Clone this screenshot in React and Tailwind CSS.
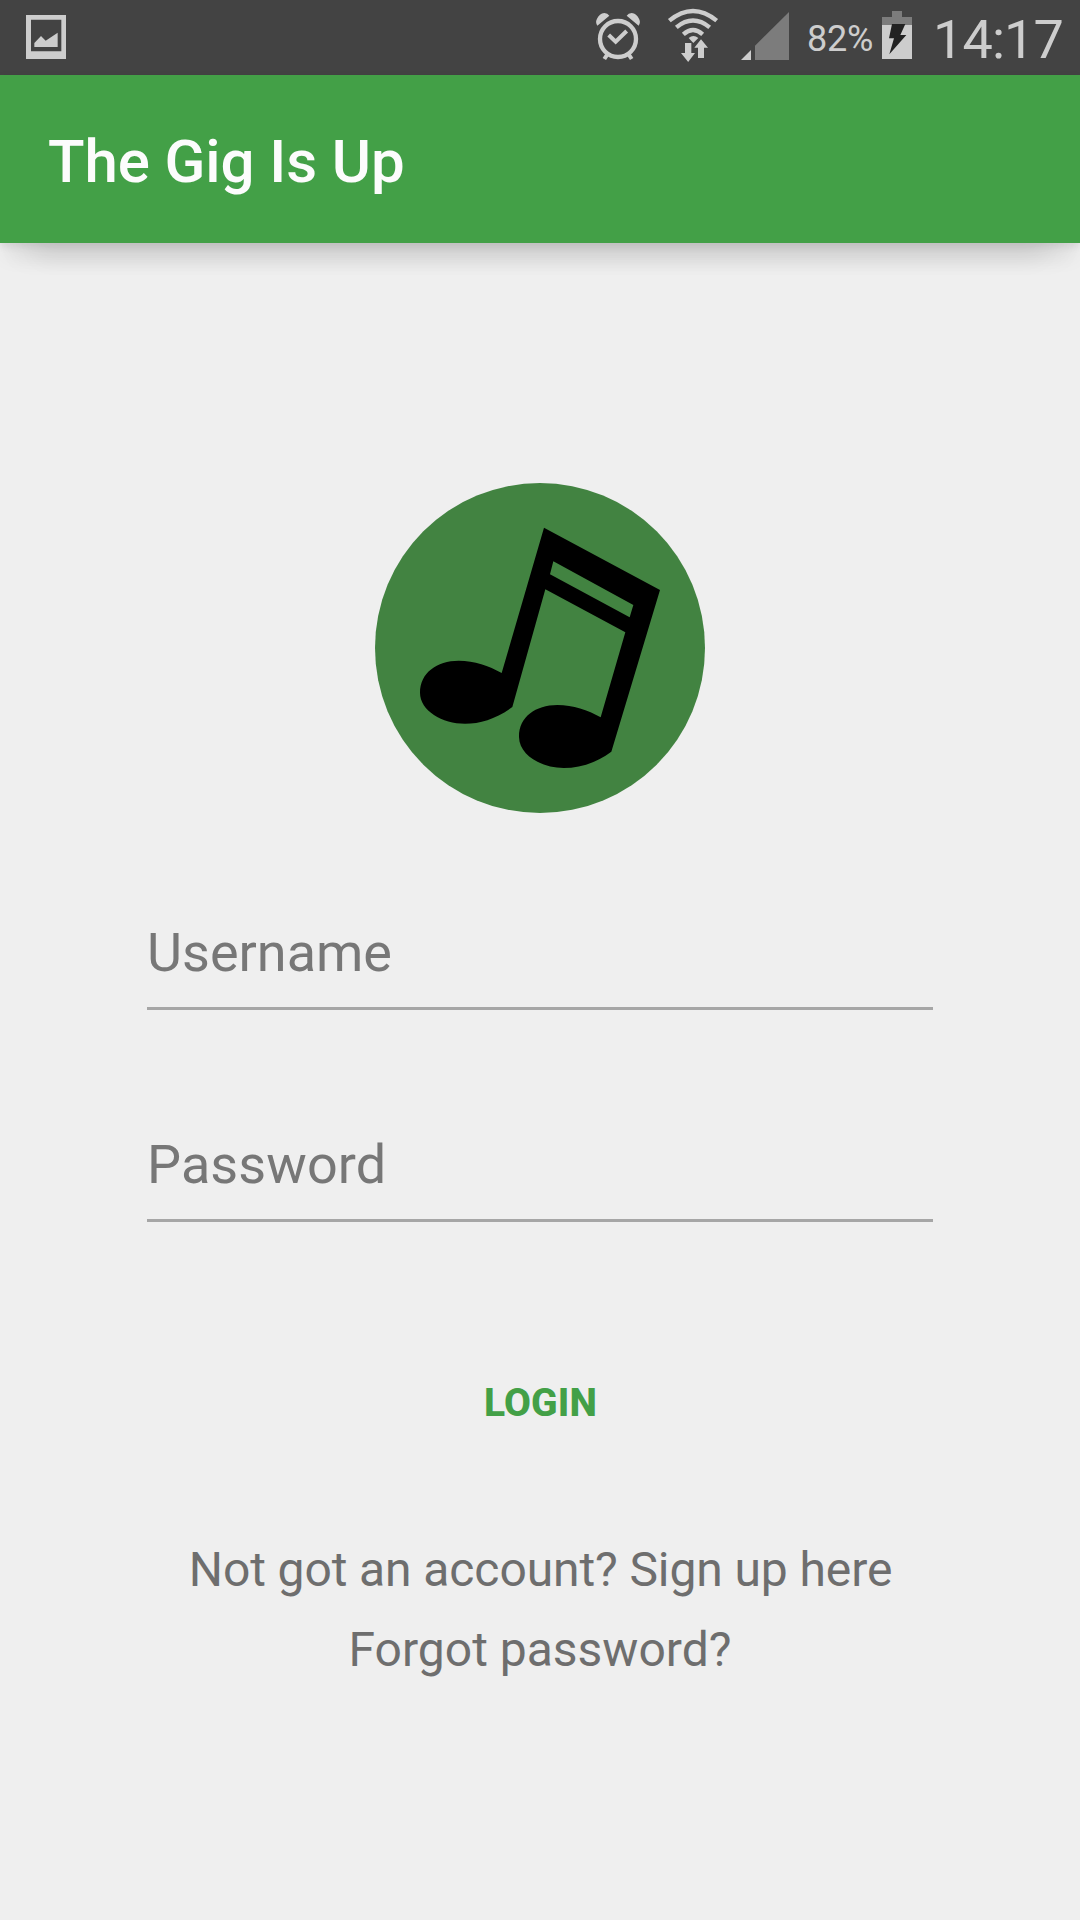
import React from "react";

function PictureIcon() {
  return (
    <svg className="ml-[26px] h-[75px] w-10 shrink-0" viewBox="78 0 120 225" fill="#cdcdcd">
      <path fillRule="evenodd" d="M78 45H198V177H78ZM93 59V154H184V59Z" />
      <path d="M103 141V129L123 108L137 122L173 98V141Z" />
    </svg>
  );
}

function AlarmIcon() {
  return (
    <svg className="ml-[530px] h-[75px] w-[45px] shrink-0" viewBox="48 0 135 225" fill="none" stroke="#cdcdcd">
      <circle cx="114" cy="117" r="54" strokeWidth="13" />
      <path d="M86 105L107 125L140 93" strokeWidth="12" />
      <path d="M82 163L73 177M146 163L155 177" strokeWidth="12" />
      <path fill="#cdcdcd" stroke="none" d="M52 77Q45 67 51 56Q58 41 73 39Q83 40 88 47ZM176 77Q183 67 177 56Q170 41 155 39Q145 40 140 47Z" />
    </svg>
  );
}

function WifiIcon() {
  return (
    <svg className="ml-[25px] h-[75px] w-[54px] shrink-0" viewBox="258 0 162 225" fill="none" stroke="#cdcdcd">
      <path d="M268 62Q339 4 410 62" strokeWidth="13" />
      <path d="M289 82Q339 41 389 82" strokeWidth="13" />
      <path d="M310 103Q339 77 368 103" strokeWidth="13" />
      <path fill="#cdcdcd" stroke="none" d="M326 114Q340 102 355 114L340 129Z" />
      <path
        fill="#cdcdcd"
        stroke="#434343"
        strokeWidth="5"
        paintOrder="stroke"
        d="M315 129H334V159H345L324.500 186L303 159H315ZM354 174V143H343L363 118L384 143H372V174Z"
      />
    </svg>
  );
}

function SignalIcon() {
  return (
    <svg className="ml-[21px] h-[75px] w-12 shrink-0" viewBox="483 0 144 225">
      <path fill="#cdcdcd" d="M483 180L513 150V180Z" />
      <path fill="#7c7c7c" d="M525 180V137L627 36V180Z" />
    </svg>
  );
}

function BatteryIcon() {
  return (
    <svg className="h-[75px] w-[30px] shrink-0" viewBox="306 0 90 225">
      <path fill="#7c7c7c" d="M336 33H366V51H396V75H306V51H336Z" />
      <path fill="#cdcdcd" d="M306 75H396V177H306Z" />
      <path fill="#222" d="M336 72H376L361 105H379L328 163L342 115H327Z" />
    </svg>
  );
}

function StatusBar() {
  return (
    <div className="flex h-[75px] items-start bg-[#434343] text-[#cdcdcd]">
      <PictureIcon />
      <AlarmIcon />
      <WifiIcon />
      <SignalIcon />
      <span className="ml-[18px] w-[75px] shrink-0 pt-[2px] text-[36px] leading-[75px] tracking-[-0.2px]">82%</span>
      <BatteryIcon />
      <span className="ml-[21px] shrink-0 whitespace-nowrap pt-[2px] text-[54px] leading-[75px] tracking-[-0.9px]">14:17</span>
    </div>
  );
}

function Logo() {
  return (
    <svg className="mt-[240px] h-[330px] w-[330px] shrink-0" viewBox="45 39 990 990">
      <circle cx="540" cy="534" r="495" fill="#428341" />
      <path
        fillRule="evenodd"
        d="M552 173L900 360L754 845C706 880 660 894 611 894C545 894 478 856 477 801C476 742 526 705 592 705C640 705 683 720 722 742L796 487L556 358L457 711C409 746 362 761 315 761C247 761 180 722 180 668C180 609 230 572 296 572C344 572 386 587 425 609ZM580 274L570 313L809 442L820 405Z"
      />
    </svg>
  );
}

function Field({ label, className }) {
  return (
    <div className={"h-[94px] w-[786px] border-b-[3px] border-[#a6a6a6] text-[54px] leading-[73px] text-[#777] " + className}>
      {label}
    </div>
  );
}

export default function App() {
  return (
    <div className="flex h-[1920px] w-[1080px] flex-col overflow-hidden bg-[#efefef] font-['Roboto',sans-serif]">
      <StatusBar />
      <header className="flex h-[168px] shrink-0 items-center bg-[#43a047] pl-12 pt-[5px] shadow-[0_20px_18px_-4px_rgba(0,0,0,0.05),0_34px_22px_-18px_rgba(0,0,0,0.05),0_54px_22px_-38px_rgba(0,0,0,0.05),0_3px_8px_0_rgba(0,0,0,0.09)]">
        <h1 className="text-[60px] font-medium leading-none tracking-[-0.1px] text-[#fcfcfc]">The Gig Is Up</h1>
      </header>
      <main className="flex flex-col items-center">
        <Logo />
        <Field label="Username" className="mt-[103px]" />
        <Field label="Password" className="mt-[118px] tracking-[0.1px]" />
        <button className="mt-[157px] pl-px text-[39px] font-extrabold leading-[48px] tracking-[0.1px] text-[#43a047]">LOGIN</button>
        <div className="mt-[103px] flex flex-col items-center text-[48px] leading-[80px] text-[#6e6e6e]">
          <a className="pl-px tracking-[-0.1px]">Not got an account? Sign up here</a>
          <a>Forgot password?</a>
        </div>
      </main>
    </div>
  );
}
